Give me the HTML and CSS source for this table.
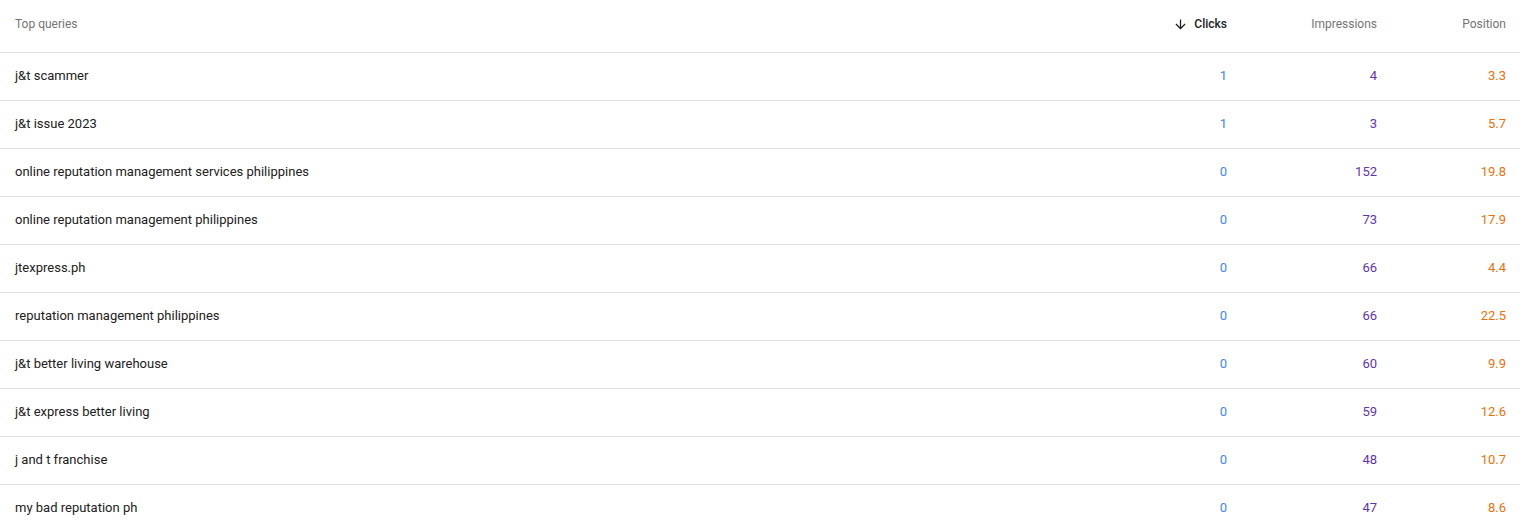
FILE: index.html
```html
<!DOCTYPE html>
<html lang="en">
<head>
<meta charset="utf-8">
<title>Top queries</title>
<link rel="stylesheet" href="styles.css">
</head>
<body>
<div class="table">
  <div class="row head">
    <div class="cell query">Top queries</div>
    <div class="cell num sorted">
      <svg class="arrow" viewBox="0 0 24 24" width="15" height="15"><path d="M20 12l-1.41-1.41L13 16.17V4h-2v12.17l-5.58-5.59L4 12l8 8 8-8z"/></svg>
      <span>Clicks</span>
    </div>
    <div class="cell num">Impressions</div>
    <div class="cell num last">Position</div>
  </div>
  <div class="row"><div class="cell query">j&amp;t scammer</div><div class="cell num clicks">1</div><div class="cell num impr">4</div><div class="cell num pos last">3.3</div></div>
  <div class="row"><div class="cell query">j&amp;t issue 2023</div><div class="cell num clicks">1</div><div class="cell num impr">3</div><div class="cell num pos last">5.7</div></div>
  <div class="row"><div class="cell query">online reputation management services philippines</div><div class="cell num clicks">0</div><div class="cell num impr">152</div><div class="cell num pos last">19.8</div></div>
  <div class="row"><div class="cell query">online reputation management philippines</div><div class="cell num clicks">0</div><div class="cell num impr">73</div><div class="cell num pos last">17.9</div></div>
  <div class="row"><div class="cell query">jtexpress.ph</div><div class="cell num clicks">0</div><div class="cell num impr">66</div><div class="cell num pos last">4.4</div></div>
  <div class="row"><div class="cell query">reputation management philippines</div><div class="cell num clicks">0</div><div class="cell num impr">66</div><div class="cell num pos last">22.5</div></div>
  <div class="row"><div class="cell query">j&amp;t better living warehouse</div><div class="cell num clicks">0</div><div class="cell num impr">60</div><div class="cell num pos last">9.9</div></div>
  <div class="row"><div class="cell query">j&amp;t express better living</div><div class="cell num clicks">0</div><div class="cell num impr">59</div><div class="cell num pos last">12.6</div></div>
  <div class="row"><div class="cell query">j and t franchise</div><div class="cell num clicks">0</div><div class="cell num impr">48</div><div class="cell num pos last">10.7</div></div>
  <div class="row"><div class="cell query">my bad reputation ph</div><div class="cell num clicks">0</div><div class="cell num impr">47</div><div class="cell num pos last">8.6</div></div>
</div>
</body>
</html>
```

FILE: styles.css
```css
html, body {
  margin: 0;
  padding: 0;
  background: #fff;
}
body {
  font-family: Roboto, "Liberation Sans", Arial, sans-serif;
  color: #212121;
  overflow: hidden;
}
.table {
  display: flex;
  flex-direction: column;
}
.row {
  display: grid;
  grid-template-columns: 1fr 150px 150px 143px;
  height: 47px;
  border-bottom: 1px solid #e0e0e0;
  font-size: 13px;
}
.row.head {
  height: 52px;
  font-size: 12px;
  color: #757575;
}
.cell {
  display: flex;
  align-items: center;
  white-space: nowrap;
  padding-bottom: 2px;
}
.head .cell {
  padding-bottom: 4px;
}
.query {
  padding-left: 15px;
}
.num {
  justify-content: flex-end;
}
.last {
  padding-right: 14px;
}
.sorted {
  color: #212121;
  font-weight: 500;
  gap: 6px;
}
.arrow {
  fill: #212121;
  flex: none;
}
.clicks { color: #4285f4; }
.impr { color: #5e35b1; }
.pos { color: #e8710a; }
```
